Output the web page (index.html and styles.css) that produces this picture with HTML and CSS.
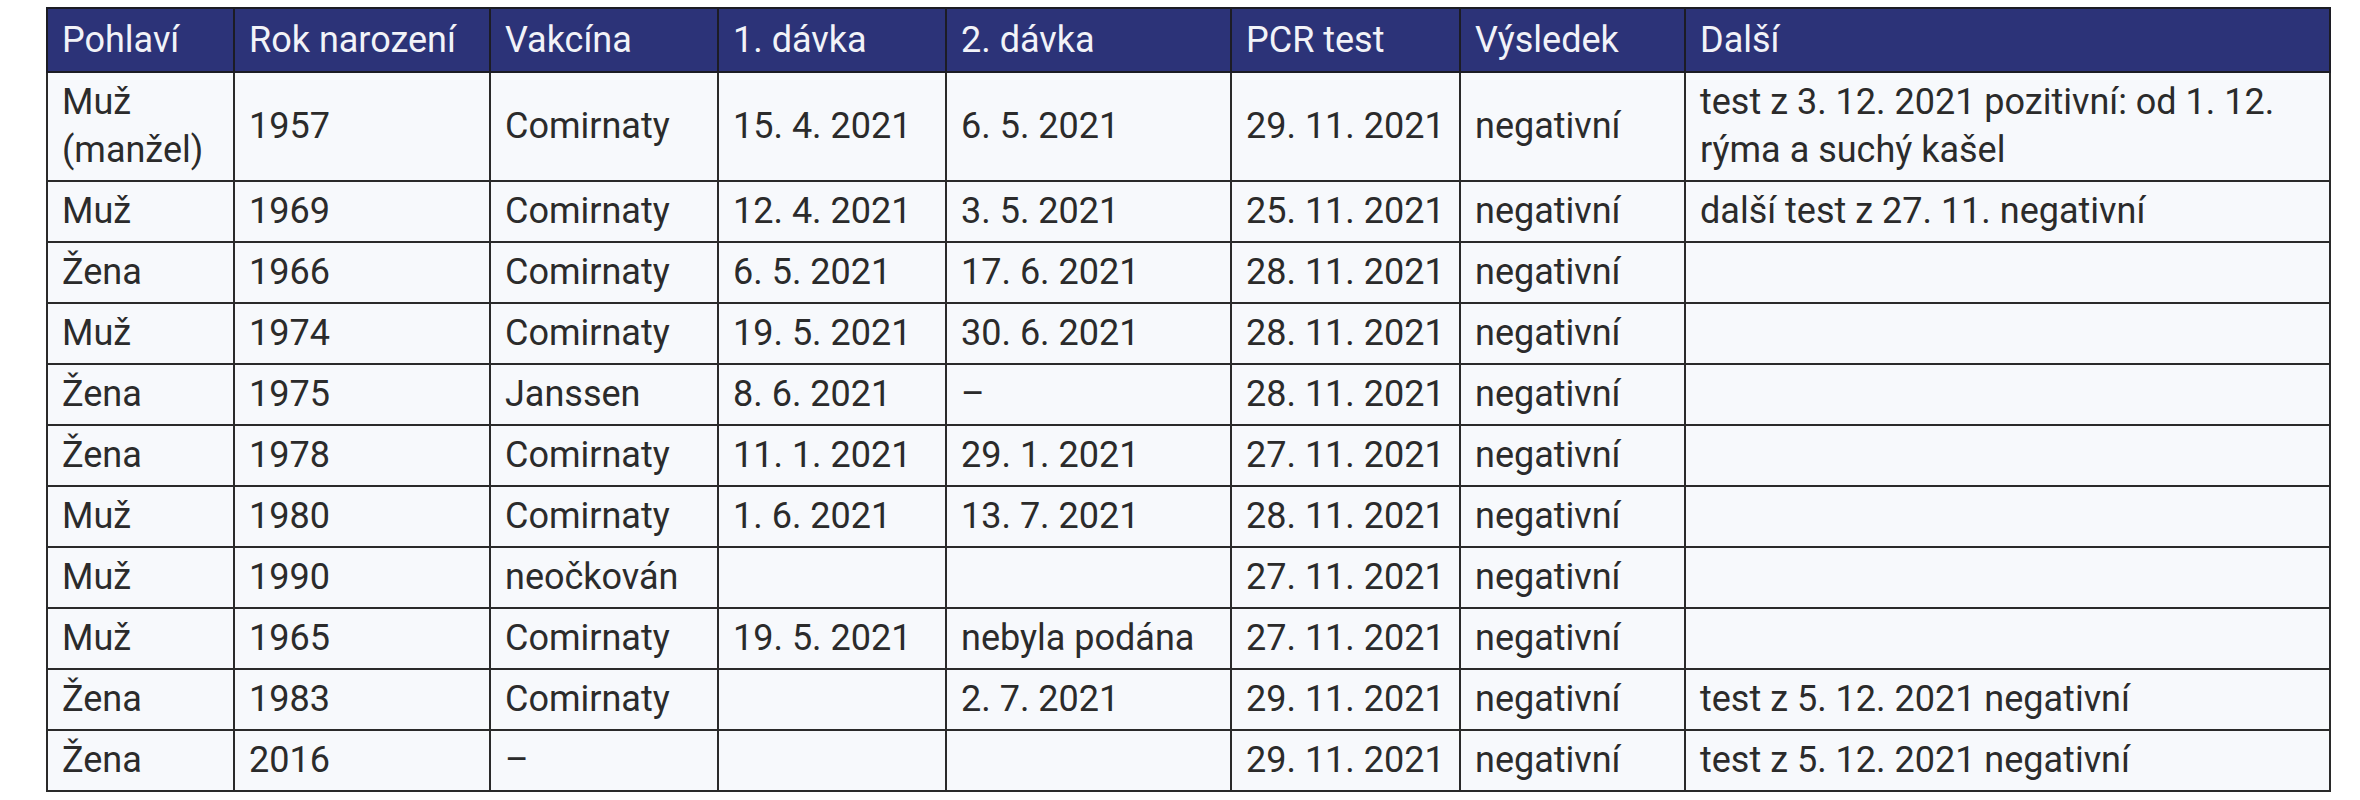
FILE: index.html
```html
<!DOCTYPE html>
<html lang="cs">
<head>
<meta charset="utf-8">
<title>Tabulka</title>
<link rel="stylesheet" href="styles.css">
</head>
<body>
<div class="page">
<table class="data">
<colgroup>
<col class="c1"><col class="c2"><col class="c3"><col class="c4"><col class="c5"><col class="c6"><col class="c7"><col class="c8">
</colgroup>
<thead>
<tr><th>Pohlaví</th><th>Rok narození</th><th>Vakcína</th><th>1. dávka</th><th>2. dávka</th><th>PCR test</th><th>Výsledek</th><th>Další</th></tr>
</thead>
<tbody>
<tr><td>Muž<br>(manžel)</td><td>1957</td><td>Comirnaty</td><td>15. 4. 2021</td><td>6. 5. 2021</td><td>29. 11. 2021</td><td>negativní</td><td>test z 3. 12. 2021 pozitivní: od 1. 12.<br>rýma a suchý kašel</td></tr>
<tr><td>Muž</td><td>1969</td><td>Comirnaty</td><td>12. 4. 2021</td><td>3. 5. 2021</td><td>25. 11. 2021</td><td>negativní</td><td>další test z 27. 11. negativní</td></tr>
<tr><td>Žena</td><td>1966</td><td>Comirnaty</td><td>6. 5. 2021</td><td>17. 6. 2021</td><td>28. 11. 2021</td><td>negativní</td><td></td></tr>
<tr><td>Muž</td><td>1974</td><td>Comirnaty</td><td>19. 5. 2021</td><td>30. 6. 2021</td><td>28. 11. 2021</td><td>negativní</td><td></td></tr>
<tr><td>Žena</td><td>1975</td><td>Janssen</td><td>8. 6. 2021</td><td>–</td><td>28. 11. 2021</td><td>negativní</td><td></td></tr>
<tr><td>Žena</td><td>1978</td><td>Comirnaty</td><td>11. 1. 2021</td><td>29. 1. 2021</td><td>27. 11. 2021</td><td>negativní</td><td></td></tr>
<tr><td>Muž</td><td>1980</td><td>Comirnaty</td><td>1. 6. 2021</td><td>13. 7. 2021</td><td>28. 11. 2021</td><td>negativní</td><td></td></tr>
<tr><td>Muž</td><td>1990</td><td>neočkován</td><td></td><td></td><td>27. 11. 2021</td><td>negativní</td><td></td></tr>
<tr><td>Muž</td><td>1965</td><td>Comirnaty</td><td>19. 5. 2021</td><td>nebyla podána</td><td>27. 11. 2021</td><td>negativní</td><td></td></tr>
<tr><td>Žena</td><td>1983</td><td>Comirnaty</td><td></td><td>2. 7. 2021</td><td>29. 11. 2021</td><td>negativní</td><td>test z 5. 12. 2021 negativní</td></tr>
<tr><td>Žena</td><td>2016</td><td>–</td><td></td><td></td><td>29. 11. 2021</td><td>negativní</td><td>test z 5. 12. 2021 negativní</td></tr>
</tbody>
</table>
</div>
</body>
</html>
```
FILE: styles.css
```css
html, body {
  margin: 0;
  padding: 0;
  background: #ffffff;
}
.page {
  padding: 7px 0 0 46px;
}
.data {
  border-collapse: collapse;
  table-layout: fixed;
  width: 2283px;
  font-family: Roboto, "Liberation Sans", sans-serif;
  font-size: 36px;
  line-height: 48px;
  color: #2b2b2b;
}
.c1 { width: 187px; }
.c2 { width: 256px; }
.c3 { width: 228px; }
.c4 { width: 228px; }
.c5 { width: 285px; }
.c6 { width: 229px; }
.c7 { width: 225px; }
.c8 { width: 645px; }
.data th {
  background: #2c3378;
  color: #f2f3f8;
  font-weight: normal;
  text-align: left;
  padding: 7px 14px;
  border: 2px solid #1c1c24;
}
.data td {
  background: #f7f9fc;
  padding: 5px 14px 6px;
  border: 2px solid #2a2a2a;
  vertical-align: middle;
  white-space: nowrap;
}
```
